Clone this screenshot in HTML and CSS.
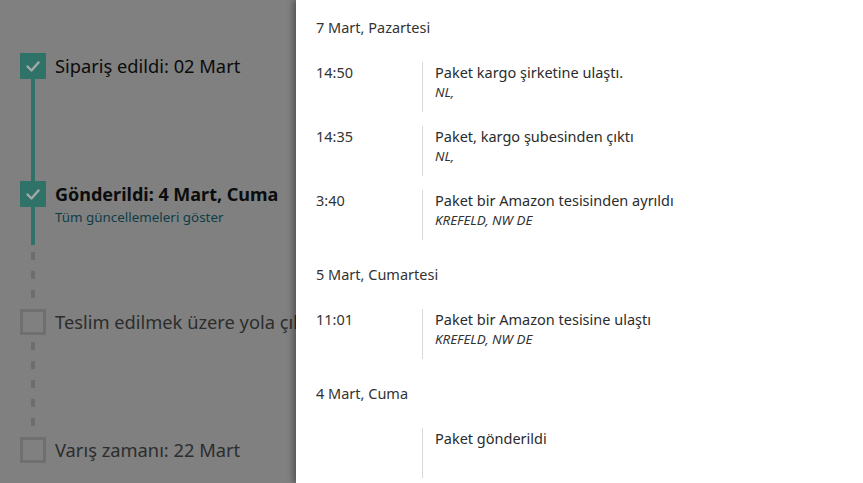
FILE: index.html
```html
<!DOCTYPE html>
<html lang="tr">
<head>
<meta charset="utf-8">
<link rel="stylesheet" href="styles.css">
</head>
<body>
<div class="page">
  <section class="tracker">
    <div class="step done">
      <div class="marker">
        <span class="box"><svg viewBox="0 0 26 26" width="26" height="26"><path d="M7.5 13.5 L11.5 17.5 L18.5 9.5" fill="none" stroke="#a3aaa8" stroke-width="2.4" stroke-linecap="round" stroke-linejoin="round"/></svg></span>
        <span class="rail solid"></span>
      </div>
      <div class="label"><div class="title">Sipariş edildi: 02 Mart</div></div>
    </div>
    <div class="step done">
      <div class="marker">
        <span class="box"><svg viewBox="0 0 26 26" width="26" height="26"><path d="M7.5 13.5 L11.5 17.5 L18.5 9.5" fill="none" stroke="#a3aaa8" stroke-width="2.4" stroke-linecap="round" stroke-linejoin="round"/></svg></span>
        <span class="rail solid short"></span>
        <span class="rail dashed"></span>
      </div>
      <div class="label">
        <div class="title bold">Gönderildi: 4 Mart, Cuma</div>
        <a class="link" href="#">Tüm güncellemeleri göster</a>
      </div>
    </div>
    <div class="step todo">
      <div class="marker">
        <span class="box"></span>
        <span class="rail dashed"></span>
      </div>
      <div class="label"><div class="title">Teslim edilmek üzere yola çıktı</div></div>
    </div>
    <div class="step todo last">
      <div class="marker">
        <span class="box"></span>
      </div>
      <div class="label"><div class="title">Varış zamanı: 22 Mart</div></div>
    </div>
  </section>

  <aside class="panel">
    <div class="day">
      <div class="day-title">7 Mart, Pazartesi</div>
      <div class="event">
        <div class="time">14:50</div>
        <div class="desc"><div class="msg">Paket kargo şirketine ulaştı.</div><div class="loc">NL,</div></div>
      </div>
      <div class="event">
        <div class="time">14:35</div>
        <div class="desc"><div class="msg">Paket, kargo şubesinden çıktı</div><div class="loc">NL,</div></div>
      </div>
      <div class="event">
        <div class="time">3:40</div>
        <div class="desc"><div class="msg">Paket bir Amazon tesisinden ayrıldı</div><div class="loc">KREFELD, NW DE</div></div>
      </div>
    </div>
    <div class="day">
      <div class="day-title">5 Mart, Cumartesi</div>
      <div class="event">
        <div class="time">11:01</div>
        <div class="desc"><div class="msg">Paket bir Amazon tesisine ulaştı</div><div class="loc">KREFELD, NW DE</div></div>
      </div>
    </div>
    <div class="day">
      <div class="day-title">4 Mart, Cuma</div>
      <div class="event">
        <div class="time"></div>
        <div class="desc"><div class="msg">Paket gönderildi</div></div>
      </div>
    </div>
  </aside>
</div>
</body>
</html>
```

FILE: styles.css
```css
html, body {
  margin: 0;
  padding: 0;
}
body {
  width: 863px;
  height: 483px;
  overflow: hidden;
  font-family: "Noto Sans", "Liberation Sans", sans-serif;
  background: #808080;
}
.page {
  display: flex;
  height: 483px;
}
.tracker {
  width: 296px;
  flex: none;
  background: #808080;
  padding: 53px 0 0 20px;
  box-sizing: border-box;
  overflow: hidden;
}
.step {
  display: flex;
  gap: 9px;
  height: 128px;
}
.step.last { height: auto; }
.marker {
  width: 26px;
  flex: none;
  display: flex;
  flex-direction: column;
  align-items: center;
}
.box {
  width: 26px;
  height: 26px;
  flex: none;
  box-sizing: border-box;
  display: block;
}
.box svg { display: block; }
.done .box { background: #2f7268; }
.todo .box { border: 3px solid #6e7070; }
.rail {
  width: 4px;
  display: block;
}
.rail.solid {
  flex: 1;
  background: #2f7268;
}
.rail.solid.short {
  flex: none;
  height: 38px;
}
.rail.dashed {
  flex: 1;
  margin: 7px 0;
  background: repeating-linear-gradient(to bottom, #6c6e6e 0 8px, transparent 8px 19px);
}
.label {
  white-space: nowrap;
}
.title {
  font-size: 18.3px;
  line-height: 26px;
  color: #0b0c0c;
}
.title.bold { font-weight: 700; font-size: 18px; }
.todo .title { color: #2c2d2d; }
.link {
  display: block;
  font-size: 13.4px;
  line-height: 20px;
  color: #0e3d46;
  text-decoration: none;
}
.panel {
  flex: 1;
  background: #fff;
  box-shadow: -3px 0 6px rgba(0, 0, 0, 0.35);
  padding: 17px 20px 0 20px;
  position: relative;
  color: #333;
  font-size: 14.5px;
  line-height: 20px;
}
.day { margin-bottom: 24px; }
.day-title {
  color: #333;
  margin-bottom: 25px;
}
.event {
  display: flex;
  height: 50px;
  margin-bottom: 14px;
}
.event:last-child { margin-bottom: 0; }
.time {
  width: 106px;
  flex: none;
}
.desc {
  border-left: 1px solid #d5d9d9;
  padding-left: 12px;
}
.msg { color: #2a2c2c; }
.loc {
  font-size: 13.4px;
  font-style: italic;
  line-height: 21px;
  color: #333;
}
```
